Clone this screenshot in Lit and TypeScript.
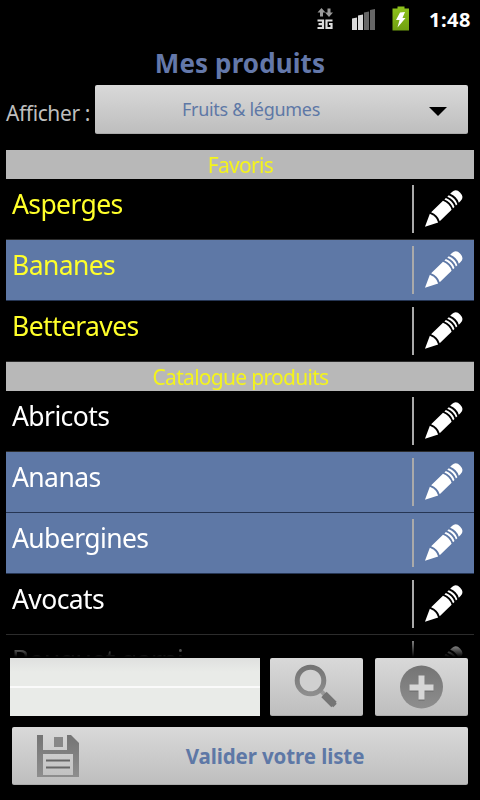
import { css, html, LitElement, svg } from "lit";
import { customElement, property } from "lit/decorators.js";
import { classMap } from "lit/directives/class-map.js";


interface Product {
    name: string;
    selected?: boolean;
}

const favorites: Product[] = [
    { name: "Asperges" },
    { name: "Bananes", selected: true },
    { name: "Betteraves" },
];

const catalogue: Product[] = [
    { name: "Abricots" },
    { name: "Ananas", selected: true },
    { name: "Aubergines", selected: true },
    { name: "Avocats" },
    { name: "Bouquet garni" },
];


@customElement("status-bar")
export class StatusBar extends LitElement {

    static styles = css`
        :host {
            display: flex;
            justify-content: flex-end;
            height: 38px;
            font: bold 20px/39px "Noto Sans", sans-serif;
            color: #fff;
        }

        .icons {
            display: block;
            width: 114px;
            height: 38px;
        }

        .clock {
            width: 51px;
            letter-spacing: 0.5px;
            white-space: nowrap;
        }
    `

    protected render() {
        return html`
            <svg class="icons" viewBox="0 0 114 38">
                <defs>
                    <linearGradient id="battery" x2="0" y2="1">
                        <stop offset="0" stop-color="#8fc31c" />
                        <stop offset="1" stop-color="#70a010" />
                    </linearGradient>
                </defs>
                <path fill="#999" d="M6.500 8l4 4.500H8V16.500H5V12.500H2.500zM14 17l-4-4.500h2.500V8.500h3v4H18z" />
                <path fill="none" stroke="#ddd" stroke-width="2.200" d="M2.500 20.500h5.500v7.500H2.500M3.500 24.200h4.500M17.500 20.500h-6V28h5v-4H14" />
                <path fill="#d8d8d8" d="M37 18.500l5-1V30h-5zM43 15.500l5-1V30h-5z" />
                <path fill="#666" d="M49 12.500l5-1V30h-5zM55 10l5-1V30h-5z" />
                <path fill="url(#battery)" d="M82.500 6.500h7v2h4.500v22H77.500V8.500H82.500z" />
                <path fill="#fff" d="M85 12.500l5-.5-2.500 6h3L82.500 27.500l2-7.500h-3.500z" />
            </svg>
            <span class="clock">1:48</span>
        `;
    }
}


@customElement("product-row")
export class ProductRow extends LitElement {

    static styles = css`
        :host {
            display: block;
        }

        .row {
            display: flex;
            box-sizing: border-box;
            height: 61px;
            padding: 6px;
            border-bottom: 1px solid #2c2c2c;
            color: #fff;
        }

        .selected {
            background: #5e78a6;
            border-bottom-color: #263654;
        }

        .favorite {
            color: #ffff2a;
        }

        .name {
            flex: 1;
            margin-top: 1px;
            font-size: 26.500px;
            line-height: 36px;
            letter-spacing: -0.6px;
            white-space: nowrap;
        }

        .edit {
            display: flex;
            height: 48px;
            border-left: 2px solid #aaa;
        }

        .pencil {
            width: 54px;
            height: 48px;
        }
    `

    @property()
    name = "";

    @property({ type: Boolean })
    selected = false;

    @property({ type: Boolean })
    favorite = false;

    protected render() {
        return html`
            <div class="${ classMap({ row: true, selected: this.selected, favorite: this.favorite }) }">
                <span class="name">${ this.name }</span>
                <span class="edit">
                    <svg class="pencil" viewBox="0 0 54 48">
                        <g fill="#fff" transform="translate(11 41.800) rotate(-44)">
                            <path d="M0 0L12.500-6Q15.500 0 12.500 6z" />
                            <path d="M14.500-6.200H31Q34 0 31 6.200H14.500Q17.500 0 14.500-6.200z" />
                            <path d="M33-6.200h2Q38 0 35 6.200h-2Q36 0 33-6.200z" />
                            <path d="M37-6.200h2Q42 0 39 6.200h-2Q40 0 37-6.200z" />
                            <path d="M41-6.200h2.500q5.500 0 5.500 6.200t-5.500 6.200h-2.500Q44 0 41-6.200z" />
                        </g>
                    </svg>
                </span>
            </div>
        `;
    }
}


@customElement("app-root")
export class AppRoot extends LitElement {

    static styles = css`
        :host {
            display: flex;
            flex-direction: column;
            box-sizing: border-box;
            width: 480px;
            height: 800px;
            overflow: hidden;
            background: #000;
            font-family: "Noto Sans", sans-serif;
        }

        h1 {
            height: 47px;
            margin: 0;
            font-size: 26px;
            line-height: 50px;
            letter-spacing: 0.1px;
            text-align: center;
            color: #6478aa;
        }

        button {
            display: flex;
            align-items: center;
            box-sizing: border-box;
            padding: 0;
            border: 0;
            border-radius: 2px;
            border-bottom: 1px solid #aaa;
            background: linear-gradient(#d9d9d9, #bebebe);
            font-family: inherit;
            color: #5e78a6;
        }

        .filter {
            display: flex;
            height: 49px;
            padding: 0 12px 0 6px;
        }

        .label {
            width: 89px;
            font-size: 21px;
            line-height: 57px;
            letter-spacing: -0.4px;
            white-space: nowrap;
            color: #bebebe;
        }

        .select {
            flex: 1;
            font-size: 18px;
            letter-spacing: -0.3px;
        }

        .value {
            width: 312px;
            text-align: center;
        }

        .arrow {
            width: 18px;
            height: 9px;
            margin: 4px 0 0 22px;
        }

        .list {
            height: 508px;
            margin: 16px 6px 0;
            overflow: hidden;
            -webkit-mask-image: linear-gradient(#000 486px, transparent 507px);
            mask-image: linear-gradient(#000 486px, transparent 507px);
        }

        .section {
            height: 29px;
            background: #b8b8b8;
            font-size: 21px;
            line-height: 30px;
            letter-spacing: -0.7px;
            text-align: center;
            text-indent: 1px;
            color: #f4f41c;
        }

        .tools {
            display: flex;
            height: 58px;
            padding: 0 12px 0 10px;
        }

        .search {
            box-sizing: border-box;
            width: 250px;
            padding: 0 8px;
            border: 0;
            background: linear-gradient(#dfe0df, #e9ebe8 14px, #e9ebe8 28px, #fafafa 28px, #fafafa 30px, #e9ebe8 30px);
            font: inherit;
        }

        .tool {
            width: 93px;
            margin-left: 10px;
            justify-content: center;
        }

        .tool + .tool {
            margin-left: 12px;
        }

        .tool svg {
            width: 48px;
            height: 48px;
        }

        .submit {
            height: 58px;
            margin: 11px 12px 0;
            font-size: 20.500px;
            font-weight: bold;
        }

        .submit svg {
            width: 48px;
            height: 48px;
            margin-left: 22px;
        }

        .submit span {
            flex: 1;
            padding-top: 1px;
            letter-spacing: -0.1px;
            text-align: center;
        }
    `

    protected render() {
        return html`
            <status-bar></status-bar>
            <h1>Mes produits</h1>
            <div class="filter">
                <span class="label">Afficher :</span>
                <button class="select">
                    <span class="value">Fruits &amp; légumes</span>
                    <svg class="arrow" viewBox="0 0 18 9"><path d="M0 0h18L9 9z" /></svg>
                </button>
            </div>
            <div class="list">
                <div class="section">Favoris</div>
                ${ favorites.map(p => this.renderProduct(p, true)) }
                <div class="section">Catalogue produits</div>
                ${ catalogue.map(p => this.renderProduct(p, false)) }
            </div>
            <div class="tools">
                <input class="search" type="text">
                <button class="tool" aria-label="Rechercher">
                    <svg viewBox="0 0 48 48">
                        ${ this.renderGradient("lens") }
                        <path d="M27 27l6 6" stroke="#999" stroke-width="4" />
                        <path d="M31 31.500l10 10" stroke="#757575" stroke-width="7.500" />
                        <path d="M31 31.500l11 11" stroke="#757575" stroke-width="5" />
                        <circle cx="17.500" cy="17.500" r="13.300" fill="#d0d0d0" stroke="url(#lens)" stroke-width="5" />
                    </svg>
                </button>
                <button class="tool" aria-label="Ajouter">
                    <svg viewBox="0 0 48 48">
                        ${ this.renderGradient("disc") }
                        <circle cx="23.500" cy="24" r="21.500" fill="url(#disc)" />
                        <path fill="#666" opacity=".5" d="M20.500 14h6v9h9v6h-9v9h-6v-9h-9v-6h9z" />
                        <path fill="#d6d6d6" d="M20.500 12.500h6v9h9v6h-9v9h-6v-9h-9v-6h9z" />
                    </svg>
                </button>
            </div>
            <button class="submit">
                <svg viewBox="0 0 48 48">
                    ${ this.renderGradient("disk") }
                    <path fill="url(#disk)" fill-rule="evenodd" d="M3 3h6v15h24V3h4l8 8v34H3zM9 22v21h30V22z" />
                    <path fill="#888" d="M20 5h9v10h-9z" />
                    <path d="M12 28.500h24M12 35.500h24" stroke="#666" stroke-width="2" />
                </svg>
                <span>Valider votre liste</span>
            </button>
        `;
    }

    renderGradient(id: string) {
        return svg`
            <linearGradient id="${ id }" x2="0" y2="1">
                <stop offset="0" stop-color="#747474" />
                <stop offset="1" stop-color="#8e8e8e" />
            </linearGradient>
        `;
    }

    renderProduct(product: Product, favorite: boolean) {
        return html`
            <product-row
                name="${ product.name }"
                ?selected="${ product.selected }"
                ?favorite="${ favorite }"
            ></product-row>
        `;
    }
}
